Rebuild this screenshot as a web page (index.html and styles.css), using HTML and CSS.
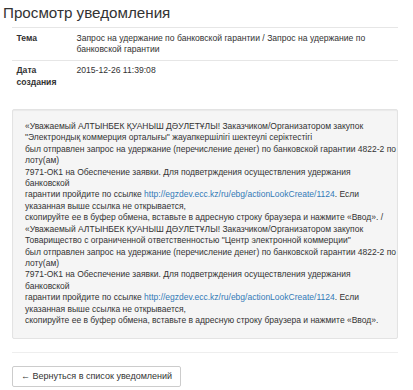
FILE: index.html
```html
<!DOCTYPE html>
<html lang="ru">
<head>
    <meta charset="UTF-8">
    <meta name="viewport" content="width=device-width, initial-scale=1.0">
    <title>Просмотр уведомления</title>
    <link rel="stylesheet" href="styles.css">
</head>
<body>
    <div class="page">
        <h2 class="page-title">Просмотр уведомления</h2>

        <table class="detail-table">
            <tr>
                <th>Тема</th>
                <td>Запрос на удержание по банковской гарантии / Запрос на удержание по банковской гарантии</td>
            </tr>
            <tr>
                <th>Дата создания</th>
                <td>2015-12-26 11:39:08</td>
            </tr>
        </table>

        <div class="well">
            «Уважаемый АЛТЫНБЕК ҚУАНЫШ ДӘУЛЕТҰЛЫ! Заказчиком/Организатором закупок<br>
            "Электрондық коммерция орталығы" жауапкершілігі шектеулі серіктестігі<br>
            был отправлен запрос на удержание (перечисление денег) по банковской гарантии 4822-2 по<br>
            лоту(ам)<br>
            7971-ОК1 на Обеспечение заявки. Для подветрждения осуществления удержания<br>
            банковской<br>
            гарантии пройдите по ссылке <a href="#">http://egzdev.ecc.kz/ru/ebg/actionLookCreate/1124</a>. Если<br>
            указанная выше ссылка не открывается,<br>
            скопируйте ее в буфер обмена, вставьте в адресную строку браузера и нажмите «Ввод». /<br>
            «Уважаемый АЛТЫНБЕК ҚУАНЫШ ДӘУЛЕТҰЛЫ! Заказчиком/Организатором закупок<br>
            Товарищество с ограниченной ответственностью "Центр электронной коммерции"<br>
            был отправлен запрос на удержание (перечисление денег) по банковской гарантии 4822-2 по<br>
            лоту(ам)<br>
            7971-ОК1 на Обеспечение заявки. Для подветрждения осуществления удержания<br>
            банковской<br>
            гарантии пройдите по ссылке <a href="#">http://egzdev.ecc.kz/ru/ebg/actionLookCreate/1124</a>. Если<br>
            указанная выше ссылка не открывается,<br>
            скопируйте ее в буфер обмена, вставьте в адресную строку браузера и нажмите «Ввод».
        </div>

        <hr class="divider">

        <a class="btn" href="#">&larr; Вернуться в список уведомлений</a>
    </div>
</body>
</html>
```

FILE: styles.css
```css
body {
    margin: 0;
    font-family: "Liberation Sans", Arial, sans-serif;
    font-size: 8.6px;
    line-height: 11.43px;
    color: #333333;
    background-color: #ffffff;
}
.page {
    padding: 3px 15px 0 12px;
}
.page-title {
    margin: 0 0 5px -9px;
    font-size: 15.2px;
    font-weight: normal;
    line-height: 19px;
}
.detail-table {
    width: 100%;
    border-collapse: collapse;
    margin-bottom: 16px;
}
.detail-table th,
.detail-table td {
    padding: 4.5px;
    text-align: left;
    vertical-align: top;
    border-top: 1px solid #e6e6e6;
}
.detail-table th {
    width: 51px;
    font-weight: bold;
}
.well {
    padding: 11px 8px 11px 12px;
    font-size: 8.5px;
    white-space: nowrap;
    background-color: #f5f5f5;
    border: 1px solid #e3e3e3;
    border-radius: 2px;
    box-shadow: inset 0 1px 1px rgba(0, 0, 0, 0.05);
}
.well a {
    color: #337ab7;
    text-decoration: none;
}
.divider {
    margin: 13px 0;
    border: 0;
    border-top: 1px solid #eeeeee;
}
.btn {
    display: inline-block;
    padding: 4px 8px;
    font-size: 9px;
    color: #333333;
    text-decoration: none;
    background-color: #ffffff;
    border: 1px solid #cccccc;
    border-radius: 2px;
}
```
